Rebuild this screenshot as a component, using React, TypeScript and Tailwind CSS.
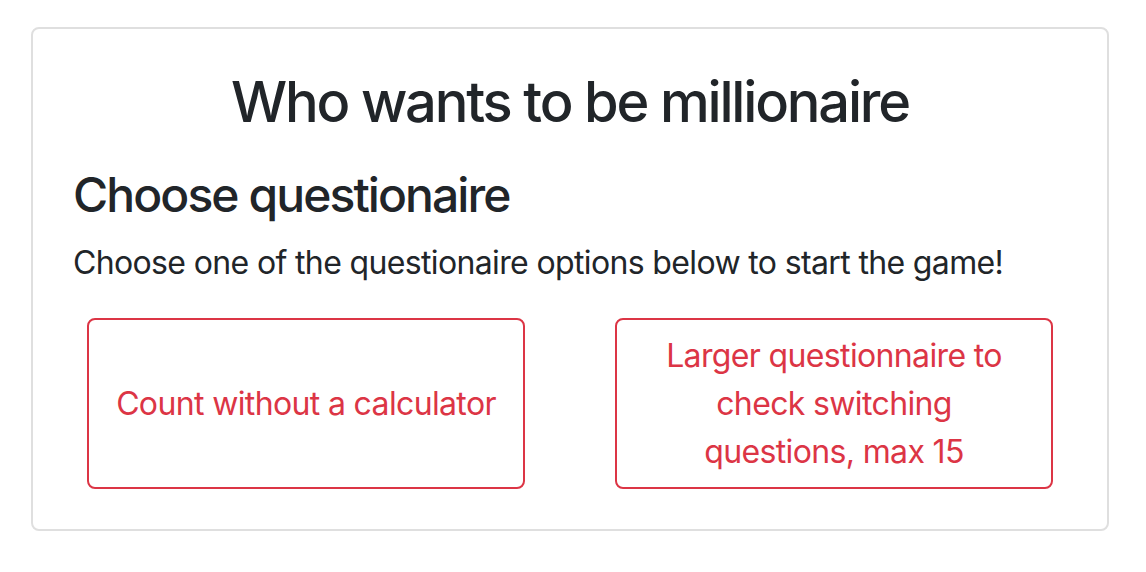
import React from "react";

export default function App() {
  return (
    <div
      className="min-h-[572px] w-[1146px] bg-white pl-[31px] pt-[27px]"
      style={{ fontFamily: "Inter, 'Noto Sans', sans-serif" }}
    >
      <div className="flex w-[1078px] flex-col rounded-[8px] border-2 border-[#dfdfdf] p-[40px] text-[#212529]">
        <h3 className="text-center text-[56px] font-medium leading-[67px] tracking-[-0.039em]">
          Who wants to be millionaire
        </h3>
        <h4 className="mt-[30px] text-[48px] font-medium leading-[58px] tracking-[-0.04em]">
          Choose questionaire
        </h4>
        <p className="mt-[15px] text-[32px] leading-[48px] tracking-[-0.02em]">
          Choose one of the questionaire options below to start the game!
        </p>
        <div className="mt-[31px] flex justify-between px-[14px]">
          <button className="flex h-[171px] w-[438px] items-center justify-center rounded-[8px] border-2 border-[#dc3545] px-[14px] text-center text-[32px] leading-[48px] tracking-[-0.02em] text-[#dc3545]">
            Count without a calculator
          </button>
          <button className="flex h-[171px] w-[438px] items-center justify-center rounded-[8px] border-2 border-[#dc3545] px-[24px] text-center text-[32px] leading-[48px] tracking-[-0.02em] text-[#dc3545]">
            Larger questionnaire to check switching questions, max 15
          </button>
        </div>
      </div>
    </div>
  );
}
